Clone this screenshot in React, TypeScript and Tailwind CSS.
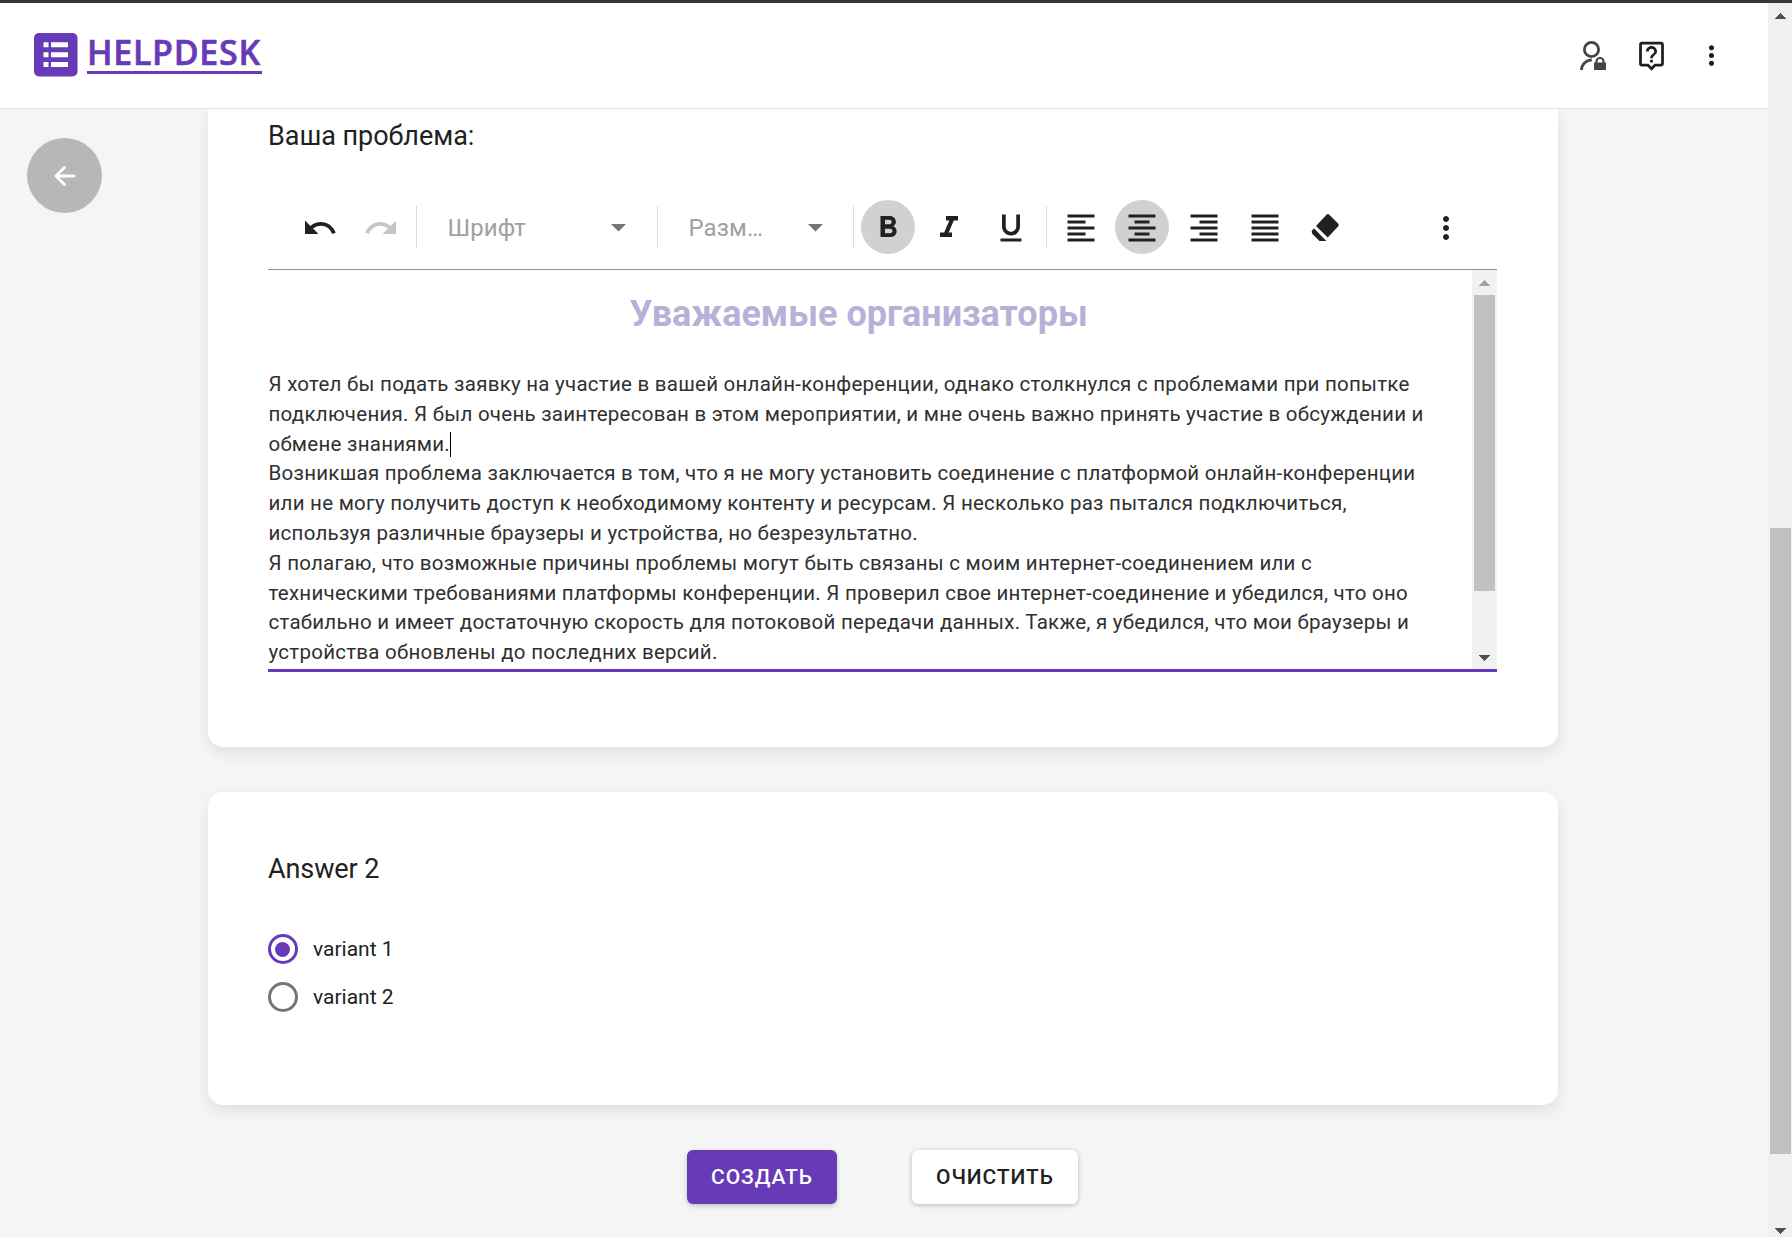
import type { ReactNode } from "react";
import {
  MdUndo, MdRedo, MdFormatBold, MdFormatItalic, MdFormatUnderlined, MdFormatAlignLeft,
  MdFormatAlignCenter, MdFormatAlignRight, MdFormatAlignJustify, MdMoreVert, MdOutlineLiveHelp,
} from "react-icons/md";

const lines = [
  "Я хотел бы подать заявку на участие в вашей онлайн-конференции, однако столкнулся с проблемами при попытке",
  "подключения. Я был очень заинтересован в этом мероприятии, и мне очень важно принять участие в обсуждении и",
  "обмене знаниями.",
  "Возникшая проблема заключается в том, что я не могу установить соединение с платформой онлайн-конференции",
  "или не могу получить доступ к необходимому контенту и ресурсам. Я несколько раз пытался подключиться,",
  "используя различные браузеры и устройства, но безрезультатно.",
  "Я полагаю, что возможные причины проблемы могут быть связаны с моим интернет-соединением или с",
  "техническими требованиями платформы конференции. Я проверил свое интернет-соединение и убедился, что оно",
  "стабильно и имеет достаточную скорость для потоковой передачи данных. Также, я убедился, что мои браузеры и",
  "устройства обновлены до последних версий.",
];

function Arrow({ up = false, color }: { up?: boolean; color: string }) {
  return (
    <svg width="11" height="6" viewBox="0 0 11 6" fill={color} shapeRendering="crispEdges" className="shrink-0">
      <path d={up ? "M5.5 0L11 6H0z" : "M5.5 6L0 0H11z"} />
    </svg>
  );
}

function Tool({ active = false, children }: { active?: boolean; children: ReactNode }) {
  return (
    <button className={`flex size-[54px] shrink-0 items-center justify-center rounded-full pt-[2px] text-[36px] text-[#212121] ${active ? "bg-[#d1d1d1]" : ""}`}>
      {children}
    </button>
  );
}

function Divider() {
  return <div className="h-[42px] w-px shrink-0 bg-[#dcdcdc]" />;
}

function Select({ label, className }: { label: string; className: string }) {
  return (
    <div className={`flex h-[54px] shrink-0 items-center justify-between text-[24px] tracking-[0.1px] text-[#a0a0a0] ${className}`}>
      <span className="pt-[2px]">{label}</span>
      <svg width="15" height="8" viewBox="0 0 15 8" fill="#757575" className="mt-[3px]"><path d="M0 0h15L7.5 7.5z" /></svg>
    </div>
  );
}

function Header() {
  return (
    <header className="flex h-[109px] shrink-0 items-center justify-between border-b border-t-[3px] border-b-[#e2e2e2] border-t-[#383636] bg-white pl-[34px] pr-[41px]">
      <div className="flex items-center">
        <svg width="44" height="44" viewBox="0 0 44 44" className="mb-px">
          <rect width="43.5" height="43.5" rx="5" fill="#673ab7" />
          <path fill="#fff" d="M9.500 9.300h5v5h-5zM17 9.300h17v5H17zM9.500 19.300h5v5h-5zM17 19.300h17v5H17zM9.500 29h5v5h-5zM17 29h17v5H17z" />
        </svg>
        <div className="ml-[9px] flex h-[37px] w-[175px] items-end whitespace-nowrap border-b-[3px] border-[#673ab7] font-['Open_Sans'] text-[34px] font-semibold leading-[38px] tracking-[0.700px] text-[#673ab7] [-webkit-text-stroke:0.6px_#673ab7]">
          HELPDESK
        </div>
      </div>
      <div className="flex items-center text-[#1f1f1f]">
        <svg width="28" height="32" viewBox="0 0 28 32" className="mr-[28px]">
          <circle cx="12.5" cy="9.5" r="7.1" fill="none" stroke="#444" strokeWidth="2.8" />
          <path d="M2.500 30c0-5.500 4.500-10 10.300-10.200" fill="none" stroke="#444" strokeWidth="2.800" />
          <path d="M15 22.500h12v7.500H15z" fill="#444" />
          <path d="M17.500 23v-1.500a3.500 3.500 0 0 1 7 0V23" fill="none" stroke="#444" strokeWidth="2.200" />
        </svg>
        <MdOutlineLiveHelp size={33} />
        <MdMoreVert size={31} className="ml-[28px]" />
      </div>
    </header>
  );
}

function Toolbar() {
  return (
    <div className="flex h-[85px] items-center border-b border-[#949494] pb-px">
      <div className="ml-[24.500px] flex gap-[7.500px]">
        <Tool><MdUndo /></Tool>
        <span className="opacity-25"><Tool><MdRedo /></Tool></span>
      </div>
      <div className="w-[7.500px]" />
      <Divider />
      <Select label="Шрифт" className="ml-[31px] mr-[31px] w-[178px]" />
      <Divider />
      <Select label="Разм…" className="ml-[31px] mr-[30px] w-[134px]" />
      <Divider />
      <div className="ml-[7px] flex gap-[7.500px]">
        <Tool active><MdFormatBold /></Tool>
        <Tool><MdFormatItalic /></Tool>
        <Tool><MdFormatUnderlined /></Tool>
      </div>
      <div className="w-[8px]" />
      <Divider />
      <div className="ml-[7.300px] flex gap-[7.500px]">
        <Tool><MdFormatAlignLeft /></Tool>
        <Tool active><MdFormatAlignCenter /></Tool>
        <Tool><MdFormatAlignRight /></Tool>
        <Tool><MdFormatAlignJustify /></Tool>
        <Tool>
          <svg width="30" height="30" viewBox="0 0 30 30" fill="currentColor" className="mr-[3px]">
            <path d="M16.500 1.800a2 2 0 0 1 2.800 0l8.800 8.800a2 2 0 0 1 0 2.800L17.700 24.500 6 12.900zM4.200 15.500L16.300 28H9.500l-7.300-7.300a3.500 3.500 0 0 1 0-3.600z" />
          </svg>
        </Tool>
      </div>
      <div className="ml-auto mr-[24.500px]"><Tool><MdMoreVert /></Tool></div>
    </div>
  );
}

function Radio({ label, checked = false }: { label: string; checked?: boolean }) {
  return (
    <label className="flex h-[48px] items-center gap-[15px] text-[21px]">
      <span className={`flex size-[30px] items-center justify-center rounded-full border-[3px] ${checked ? "border-[#673ab7]" : "border-[#757575]"}`}>
        {checked && <span className="mr-px size-[15px] rounded-full bg-[#673ab7]" />}
      </span>
      <span className="pt-[2px]">{label}</span>
    </label>
  );
}

export default function App() {
  return (
    <div className="flex h-[1237px] w-[1792px] flex-col overflow-hidden bg-[#f5f5f5] font-['Roboto',sans-serif] text-[#212121]">
      <div className="flex min-h-0 flex-1">
        <div className="flex w-[1768px] flex-col">
          <Header />
          <main className="flex min-h-0 flex-1 flex-col overflow-hidden">
            <div className="flex items-start">
              <button className="ml-[27px] mt-[29px] flex size-[75px] items-center justify-center rounded-full bg-[#b7b7b7]">
                <svg width="22" height="20" viewBox="0 0 22 20" fill="none" stroke="#fff" strokeWidth="2.800" strokeLinecap="round" strokeLinejoin="round">
                  <path d="M10.500 1.500L2 10l8.500 8.500M2 10h18" />
                </svg>
              </button>
              <section className="ml-[106px] h-[638px] w-[1350px] rounded-b-[15px] bg-white pl-[60px] shadow-[0_6px_15px_rgba(0,0,0,0.09)]">
                <h2 className="h-[76px] pt-[9px] text-[27px] leading-[36px] tracking-[-0.050px]">Ваша проблема:</h2>
                <div className="w-[1229px]">
                  <Toolbar />
                  <div className="flex h-[402px] border-b-[3px] border-[#673ab7]">
                    <div className="w-[1204px] overflow-hidden whitespace-nowrap">
                      <h1 className="pl-[361.500px] pt-[23px] text-[36px] font-bold leading-[42px] text-[#b8b1d7]">Уважаемые организаторы</h1>
                      <div className="mt-[35px] pl-[0.500px] text-[20.500px] leading-[29.800px] tracking-[0.254px] text-[#303030]">
                        {lines.map((line, i) => (
                          <p key={line} className="flex items-center">
                            {line}
                            {i === 2 && <span className="h-[25px] w-px bg-black" />}
                          </p>
                        ))}
                      </div>
                    </div>
                    <div className="flex w-[25px] flex-col items-center bg-[#f1f1f1] pb-[8px] pt-[10px]">
                      <Arrow up color="#a3a3a3" />
                      <div className="mb-auto mt-[9px] h-[296px] w-[21px] bg-[#c1c1c1]" />
                      <Arrow color="#505050" />
                    </div>
                  </div>
                </div>
              </section>
            </div>
            <section className="ml-[208px] mt-[45px] h-[313px] w-[1350px] shrink-0 rounded-[15px] bg-white pl-[60px] shadow-[0_6px_15px_rgba(0,0,0,0.09)]">
              <h2 className="pb-[38px] pt-[59px] text-[27px] leading-[36px] tracking-[-0.100px]">Answer 2</h2>
              <Radio label="variant 1" checked />
              <Radio label="variant 2" />
            </section>
            <div className="ml-[687px] mt-[45px] flex gap-[75px] text-[21px] font-medium tracking-[0.900px]">
              <button className="h-[54px] w-[150px] rounded-[6px] bg-[#673ab7] pt-[2px] text-white shadow-[0_2px_5px_rgba(0,0,0,0.2)]">СОЗДАТЬ</button>
              <button className="h-[54px] w-[166px] rounded-[6px] bg-white pt-[2px] shadow-[0_1px_5px_rgba(0,0,0,0.25)]">ОЧИСТИТЬ</button>
            </div>
          </main>
        </div>
        <aside className="flex w-[24px] flex-col border-t-[3px] border-[#383636] bg-[#f0f0f0]">
          <div className="flex flex-1 flex-col items-center pb-[3px] pl-px pt-[10px]">
            <Arrow up color="#505050" />
            <div className="mb-auto mt-[509px] h-[626px] w-[21px] bg-[#c1c1c1]" />
            <Arrow color="#505050" />
          </div>
        </aside>
      </div>
    </div>
  );
}
